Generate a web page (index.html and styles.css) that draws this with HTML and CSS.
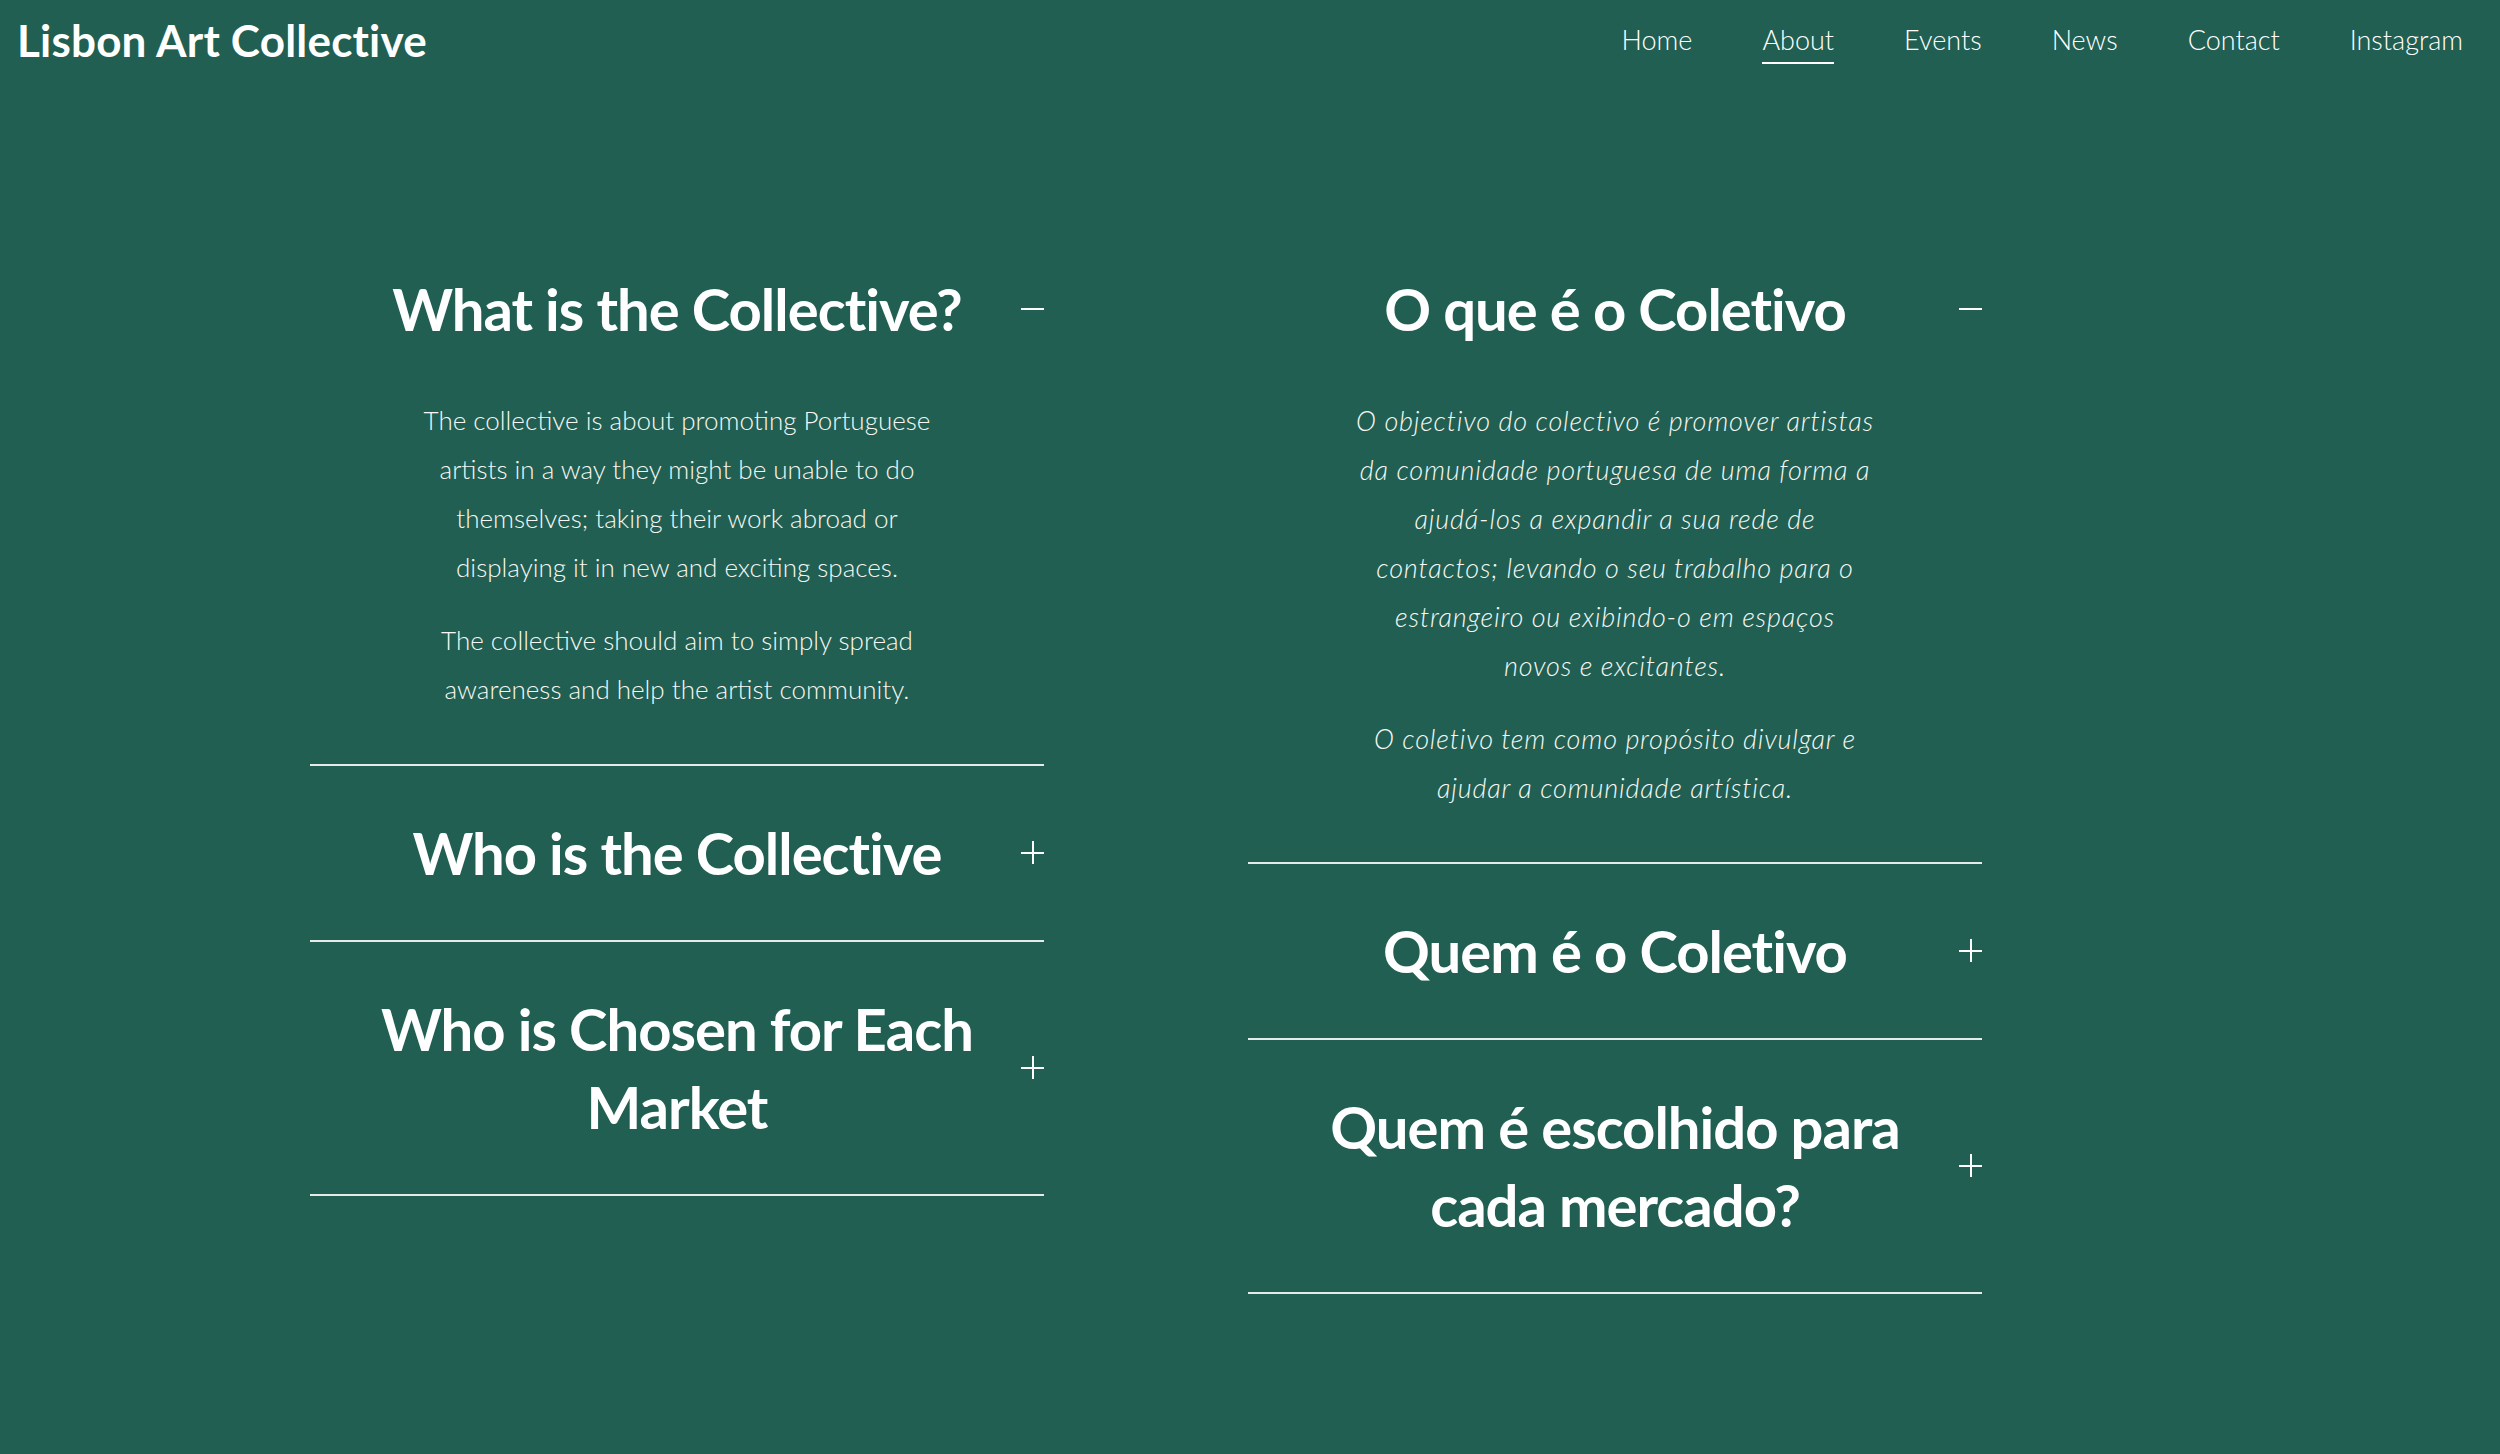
FILE: index.html
```html
<!DOCTYPE html>
<html lang="en">

<head>
    <meta charset="utf-8">
    <title>About - Lisbon Art Collective</title>
    <link rel="stylesheet" href="styles.css">
</head>

<body>
    <!-- top bar: site name on the left, menu on the right -->
    <header class="topbar">
        <a class="brand" href="#">Lisbon Art Collective</a>
        <nav class="menu">
            <a href="#">Home</a>
            <a class="current" href="#">About</a>
            <a href="#">Events</a>
            <a href="#">News</a>
            <a href="#">Contact</a>
            <a href="#">Instagram</a>
        </nav>
    </header>

    <main class="columns">
        <!-- English -->
        <section class="faq">
            <div class="item open">
                <h2 class="question">What is the Collective?<span class="toggle minus"></span></h2>
                <div class="answer">
                    <p>The collective is about promoting Portuguese artists in a way they might be unable to do themselves; taking their work abroad or displaying it in new and exciting spaces.</p>
                    <p>The collective should aim to simply spread awareness and help the artist community.</p>
                </div>
            </div>
            <div class="item">
                <h2 class="question">Who is the Collective<span class="toggle plus"></span></h2>
            </div>
            <div class="item">
                <h2 class="question">Who is Chosen for Each Market<span class="toggle plus"></span></h2>
            </div>
        </section>

        <!-- Portuguese -->
        <section class="faq">
            <div class="item open">
                <h2 class="question">O que é o Coletivo<span class="toggle minus"></span></h2>
                <div class="answer pt">
                    <p>O objectivo do colectivo é promover artistas da comunidade portuguesa de uma forma a ajudá&#8209;los a expandir a sua rede de contactos; levando o seu trabalho para o estrangeiro ou exibindo&#8209;o em espaços novos&nbsp;e excitantes.</p>
                    <p>O coletivo tem como propósito divulgar e ajudar a comunidade artística.</p>
                </div>
            </div>
            <div class="item">
                <h2 class="question">Quem é o Coletivo<span class="toggle plus"></span></h2>
            </div>
            <div class="item">
                <h2 class="question">Quem é escolhido para cada mercado?<span class="toggle plus"></span></h2>
            </div>
        </section>
    </main>
</body>

</html>
```

FILE: styles.css
```css
html {
    background-color: #215f53;
}

body {
    margin: 0;
    color: #ffffff;
    font-family: Lato, "Open Sans", sans-serif;
}

a {
    color: #ffffff;
    text-decoration: none;
}

.topbar {
    display: flex;
    justify-content: space-between;
    align-items: center;
    height: 80px;
    padding: 0 37px 0 17px;
}

.brand {
    font-size: 44px;
    font-weight: 700;
    letter-spacing: 0.2px;
}

.menu {
    display: flex;
    gap: 70px;
}

.menu a {
    font-size: 27px;
    font-weight: 300;
    padding: 6px 0;
    border-bottom: 2px solid transparent;
}

.menu a.current {
    border-bottom-color: #ffffff;
}

.columns {
    display: grid;
    grid-template-columns: 734px 734px;
    gap: 204px;
    padding: 142px 0 0 310px;
}

.item {
    border-bottom: 2px solid #e4ebe8;
}

.question {
    position: relative;
    margin: 0;
    padding: 48px 56px;
    font-size: 58px;
    font-weight: 700;
    line-height: 78px;
    letter-spacing: -1px;
    text-align: center;
}

/* +/- marks on the right of each question */
.toggle {
    position: absolute;
    right: 0;
    top: 50%;
    width: 23px;
    height: 23px;
    margin-top: -12px;
}

.toggle::before,
.toggle::after {
    content: "";
    position: absolute;
    background: #ffffff;
}

.toggle::before {
    left: 0;
    right: 0;
    top: 11px;
    height: 2px;
}

.plus::after {
    top: 0;
    bottom: 0;
    left: 11px;
    width: 2px;
}

.answer {
    width: 540px;
    margin: 0 auto;
    padding-bottom: 50px;
    font-size: 26px;
    font-weight: 300;
    line-height: 49px;
    text-align: center;
    color: #f6f7f2;
}

.answer p {
    margin: 0 0 24px;
}

.answer p:last-child {
    margin-bottom: 0;
}

.answer.pt {
    width: 525px;
    font-size: 27px;
    font-style: italic;
    letter-spacing: 0.8px;
}
```
